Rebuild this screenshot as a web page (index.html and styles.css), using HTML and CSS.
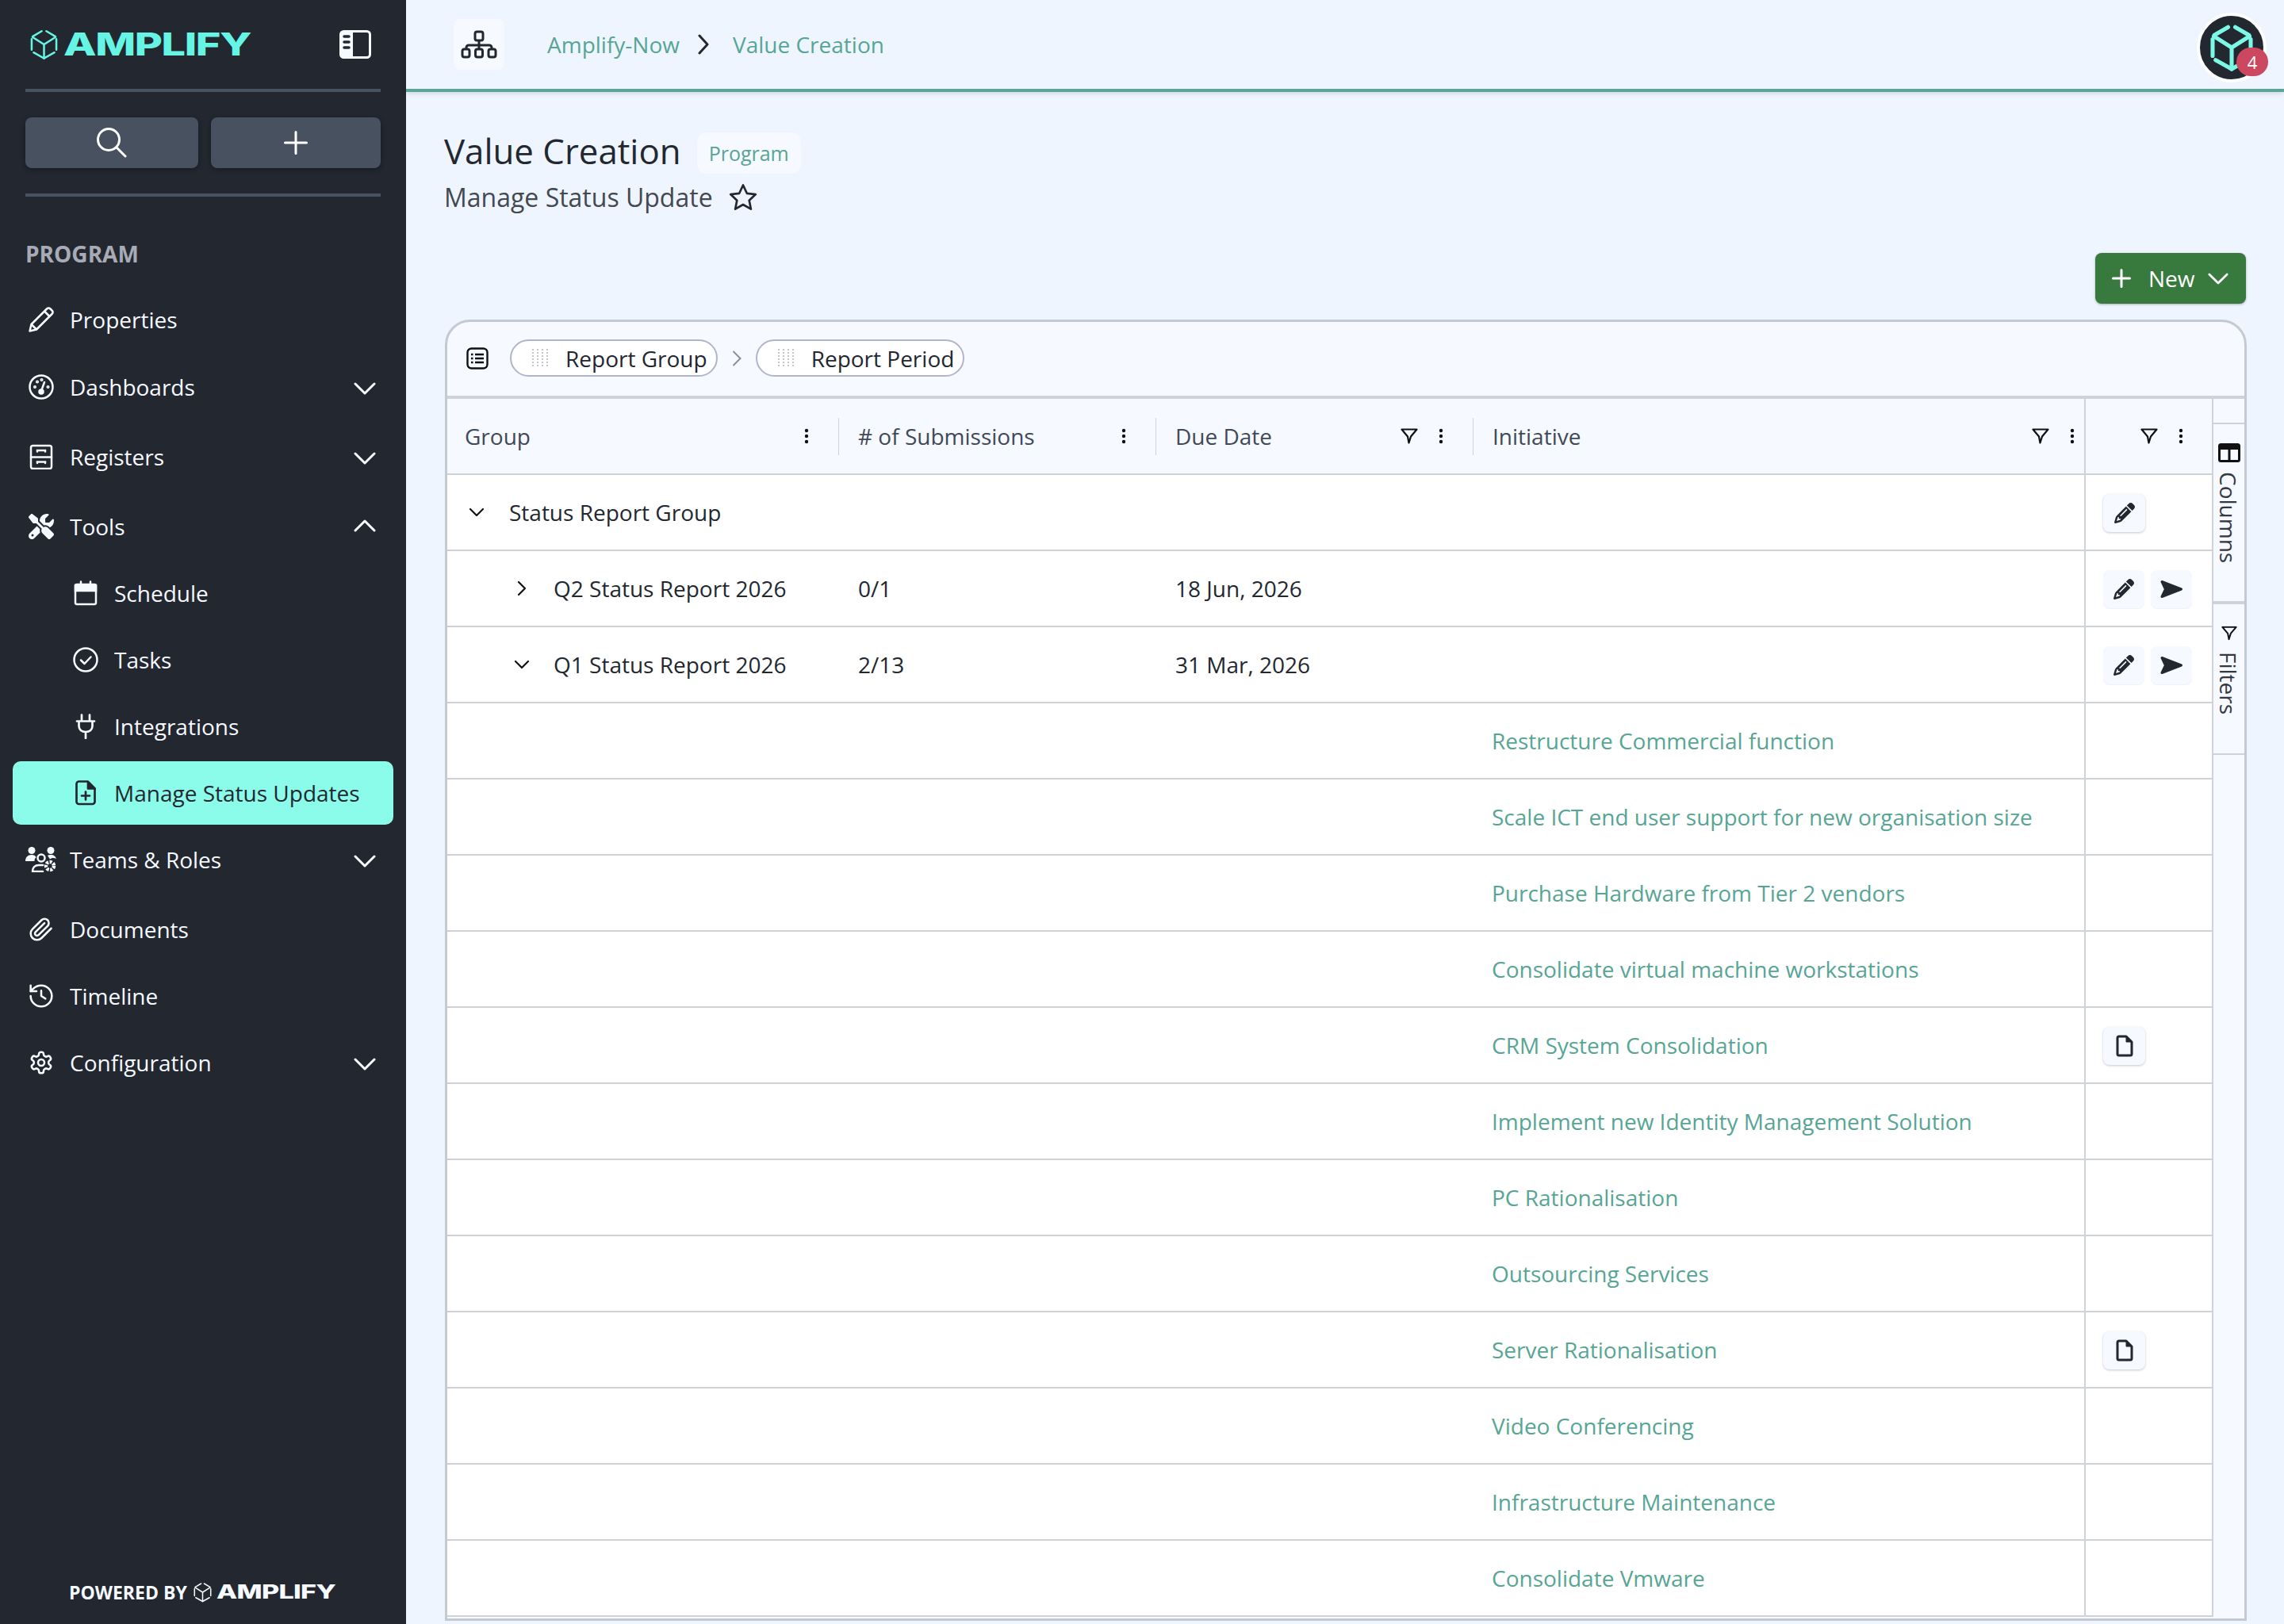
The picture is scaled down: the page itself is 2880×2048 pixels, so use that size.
FILE: index.html
```html
<!DOCTYPE html>
<html>
<head>
  <meta charset="utf-8">
  <title>Value Creation</title>
  <link rel="stylesheet" href="styles.css">
</head>
<body>
  <!-- shared icons -->
  <svg class="sprite" width="0" height="0">
    <symbol id="i-cube" viewBox="0 0 36 40">
      <g fill="none" stroke="currentColor" stroke-linecap="round">
        <path d="M3.5 9.5 15 2.8M21 2.8 32.5 9.5M2 13v14M34 13v14M4.5 30.5 18 38l13.5-7.5"/>
        <path d="M3 10.5 18 20l15-9.500M18 20v18"/>
      </g>
    </symbol>
    <symbol id="i-chev" viewBox="0 0 28 16">
      <path d="M2 2l12 12L26 2" fill="none" stroke="currentColor" stroke-width="3" stroke-linecap="round" stroke-linejoin="round"/>
    </symbol>
    <symbol id="i-small-down" viewBox="0 0 20 12">
      <path d="M2 2l8 8 8-8" fill="none" stroke="currentColor" stroke-width="2.200" stroke-linecap="round" stroke-linejoin="round"/>
    </symbol>
    <symbol id="i-small-right" viewBox="0 0 12 20">
      <path d="M2 2l8 8-8 8" fill="none" stroke="currentColor" stroke-width="2.200" stroke-linecap="round" stroke-linejoin="round"/>
    </symbol>
    <symbol id="i-filter" viewBox="0 0 22 20">
      <path d="M1.500 1.500h19L13 10.500 10.500 18.500 9 10.500z" fill="none" stroke="currentColor" stroke-width="2.200" stroke-linejoin="round"/>
    </symbol>
    <symbol id="i-dots" viewBox="0 0 6 20">
      <circle cx="3" cy="3" r="2.200" fill="currentColor"/>
      <circle cx="3" cy="10" r="2.200" fill="currentColor"/>
      <circle cx="3" cy="17" r="2.200" fill="currentColor"/>
    </symbol>
    <symbol id="i-pencil" viewBox="0 0 512 512">
      <path fill="currentColor" d="M410.300 231l11.300-11.300-33.900-33.900-62.100-62.100L291.700 89.800l-11.300 11.300-22.600 22.600L58.600 322.900c-10.400 10.400-18 23.300-22.200 37.400L1 480.700c-2.500 8.400-.2 17.500 6.100 23.700s15.300 8.500 23.700 6.100l120.300-35.400c14.100-4.200 27-11.800 37.400-22.200L387.700 253.700 410.300 231zM160 399.400l-9.100 22.700c-4 3.100-8.500 5.400-13.300 6.900L59.400 452l23-78.100c1.400-4.900 3.800-9.400 6.900-13.300l22.700-9.100v32c0 8.800 7.200 16 16 16h32zM362.700 18.700L348.300 33.200 325.700 55.800 314.300 67.100l33.900 33.900 62.100 62.100 33.900 33.900 11.300-11.300 22.600-22.600 14.500-14.500c25-25 25-65.500 0-90.500L453.300 18.700c-25-25-65.500-25-90.500 0zm-47.400 168l-144 144c-6.200 6.200-16.400 6.200-22.600 0s-6.200-16.400 0-22.600l144-144c6.200-6.200 16.400-6.200 22.600 0s6.200 16.400 0 22.600z"/>
    </symbol>
    <symbol id="i-send" viewBox="0 0 30 24">
      <path d="M3 2.500 27.500 12 3 21.500 7.500 12z" fill="currentColor" stroke="currentColor" stroke-width="3" stroke-linejoin="round"/>
    </symbol>
    <symbol id="i-file" viewBox="0 0 22 28">
      <path d="M4 2h9l7 7v15a2 2 0 0 1-2 2H4a2 2 0 0 1-2-2V4a2 2 0 0 1 2-2z" fill="none" stroke="currentColor" stroke-width="3" stroke-linejoin="round"/>
      <path d="M13 2l7 7h-7z" fill="currentColor" stroke="currentColor" stroke-linejoin="round"/>
    </symbol>
    <symbol id="i-grip" viewBox="0 0 22 24">
      <g fill="none" stroke="#c2c5ca" stroke-width="2" stroke-dasharray="2 2">
        <path d="M2 0v24M8 0v24M14 0v24M20 0v24"/>
      </g>
    </symbol>
  </svg>

  <div class="app">
    <aside class="sidebar">
      <div class="brand">
        <div class="logo">
          <svg class="logo-cube"><use href="#i-cube"/></svg>
          <span class="logo-text">AMPLIFY</span>
        </div>
        <svg class="toggle" viewBox="0 0 40 36">
          <rect x="1.500" y="1.500" width="37" height="33" rx="4" fill="none" stroke="#f6f9ff" stroke-width="3"/>
          <path d="M4 2h13v32H4a2 2 0 0 1-2-2V4a2 2 0 0 1 2-2z" fill="#f6f9ff"/>
          <path d="M6 8h6M6 15h6M6 22h6" stroke="#222730" stroke-width="3.500" stroke-linecap="round"/>
        </svg>
      </div>
      <div class="side-tools">
        <button class="tool-btn search-btn">
          <svg width="38" height="38" viewBox="0 0 38 38" fill="none" stroke="#fff" stroke-width="3" stroke-linecap="round"><circle cx="15" cy="15" r="13.500"/><path d="M25 25l11 11"/></svg>
        </button>
        <button class="tool-btn">
          <svg width="30" height="30" viewBox="0 0 30 30" fill="none" stroke="#fff" stroke-width="3" stroke-linecap="round"><path d="M15 1.500v27M1.500 15h27"/></svg>
        </button>
      </div>
      <div class="side-label">PROGRAM</div>

      <nav class="nav">
        <a class="nav-item first">
          <svg class="nav-icon" viewBox="0 0 32 32" fill="none" stroke="currentColor" stroke-width="2.500" stroke-linejoin="round"><path d="M1.500 30.500l2-8.500L23 2.500c1.500-1.500 3-1.500 4.500 0l2 2c1.500 1.500 1.500 3 0 4.500L10 28.500z"/><path d="M20 5.500l6.500 6.500"/><path d="M3.500 22l6.500 6.500"/></svg>
          Properties
        </a>
        <a class="nav-item tall">
          <svg class="nav-icon" viewBox="0 0 32 32" fill="none" stroke="currentColor" stroke-width="2.500" stroke-linecap="round"><circle cx="16" cy="16" r="14.500"/><path d="M16 21l4-11"/><circle cx="16" cy="22" r="2.500" fill="currentColor"/><circle cx="8" cy="16" r=".8"/><circle cx="24.500" cy="16" r=".8"/><circle cx="11" cy="9.500" r=".8"/><circle cx="16.500" cy="7" r=".8"/></svg>
          Dashboards
          <svg class="nav-chev"><use href="#i-chev"/></svg>
        </a>
        <a class="nav-item tall">
          <svg class="nav-icon" viewBox="0 0 32 32" fill="none" stroke="currentColor" stroke-width="2.500" stroke-linecap="round"><rect x="3" y="2" width="26" height="29" rx="2.500"/><path d="M3 16.500h26M11 9.500V8h10v1.500M11 24v-1.500h10V24"/></svg>
          Registers
          <svg class="nav-chev"><use href="#i-chev"/></svg>
        </a>
        <a class="nav-item tall">
          <svg class="nav-icon" viewBox="0 0 512 512"><path fill="currentColor" d="M78.600 5C69.100-2.400 55.600-1.500 47 7L7 47c-8.500 8.500-9.400 22-2.100 31.600l80 104c4.500 5.900 11.600 9.400 19 9.400h54.100l109 109c-14.700 29-10 65.400 14.300 89.600l112 112c12.500 12.500 32.800 12.500 45.300 0l64-64c12.500-12.500 12.500-32.800 0-45.300l-112-112c-24.200-24.200-60.600-29-89.600-14.300l-109-109V104c0-7.500-3.500-14.500-9.400-19L78.600 5zM19.900 396.100C7.200 408.800 0 426.100 0 444.100C0 481.600 30.400 512 67.900 512c18 0 35.300-7.200 48-19.900L233.700 374.300c-7.800-20.900-9-43.600-3.600-65.100l-61.700-61.700L19.900 396.100zM512 144c0-10.500-1.100-20.700-3.200-30.500c-2.400-11.200-16.100-14.100-24.200-6l-63.900 63.900c-3 3-7.100 4.700-11.300 4.700H352c-8.800 0-16-7.200-16-16V102.600c0-4.200 1.700-8.300 4.700-11.300l63.900-63.900c8.100-8.100 5.200-21.800-6-24.200C388.700 1.100 378.500 0 368 0C288.500 0 224 64.500 224 144l0 .8 85.300 85.300c36-9.100 75.800 .5 104 28.700L429 274.500c49-23 83-72.800 83-130.500zM56 432a24 24 0 1 1 48 0 24 24 0 1 1 -48 0z"/></svg>
          Tools
          <svg class="nav-chev up"><use href="#i-chev"/></svg>
        </a>
        <div class="sub-list">
          <a class="nav-item sub">
            <svg class="nav-icon" viewBox="0 0 32 32" fill="none" stroke="currentColor" stroke-width="2.500" stroke-linecap="round"><rect x="3" y="5" width="26" height="25" rx="2"/><path d="M3 6h26v7H3z" fill="currentColor"/><path d="M10 1.500V6M22 1.500V6"/></svg>
            Schedule
          </a>
          <a class="nav-item sub">
            <svg class="nav-icon" viewBox="0 0 32 32" fill="none" stroke="currentColor" stroke-width="2.500" stroke-linecap="round" stroke-linejoin="round"><circle cx="16" cy="16" r="14.500"/><path d="M10 16.500l4.500 4.500 8-8.500"/></svg>
            Tasks
          </a>
          <a class="nav-item sub">
            <svg class="nav-icon" viewBox="0 0 32 32" fill="none" stroke="currentColor" stroke-width="2.700" stroke-linecap="round" stroke-linejoin="round"><path d="M11 1.500v8M21 1.500v8M16 23v8M5 9.500h22M7.500 10v5.500C7.500 20 11 23 16 23s8.500-3 8.500-7.500V10"/></svg>
            Integrations
          </a>
          <a class="nav-item sub active">
            <svg class="nav-icon" viewBox="0 0 32 32" fill="none" stroke="currentColor" stroke-width="2.700" stroke-linejoin="round"><path d="M8 1.500h11l9 9V27a3 3 0 0 1-3 3H8a3 3 0 0 1-3-3V4.500a3 3 0 0 1 3-3z" transform="translate(-.5 0)"/><path d="M19 2l8.500 8.500H19z" fill="currentColor"/><path d="M16 14.500v10M11 19.500h10" stroke-linecap="round"/></svg>
            Manage Status Updates
          </a>
        </div>
        <a class="nav-item tall">
          <svg class="nav-icon wide" viewBox="0 0 40 32">
            <g fill="currentColor"><circle cx="8" cy="4.500" r="4.500"/><circle cx="32" cy="4.500" r="4.500"/><path d="M0 18c0-5 3-8 8-8 3 0 4.500 1 5.500 3-1.500 1.500-2 3-2 5z"/><path d="M28 11c1-1 2.500-1 4-1 4 0 6 2 7 5-3-1.500-6-1-8 .5z"/></g>
            <g fill="none" stroke="currentColor" stroke-width="2.500"><circle cx="20" cy="14" r="4.500"/><path d="M9 31c0-5 3-8 8-8h5M9 31h13" stroke-linecap="round"/></g>
            <circle cx="31" cy="24" r="5" fill="none" stroke="currentColor" stroke-width="4.500" stroke-dasharray="3 1.500"/>
          </svg>
          Teams &amp; Roles
          <svg class="nav-chev"><use href="#i-chev"/></svg>
        </a>
        <a class="nav-item tall">
          <svg class="nav-icon" viewBox="0 0 24 24" fill="none" stroke="currentColor" stroke-width="1.900" stroke-linecap="round" stroke-linejoin="round"><path d="m21.440 11.050-9.190 9.190a6 6 0 0 1-8.490-8.490l8.570-8.570A4 4 0 1 1 18 8.840l-8.590 8.570a2 2 0 0 1-2.830-2.830l8.490-8.480"/></svg>
          Documents
        </a>
        <a class="nav-item after-tall">
          <svg class="nav-icon" viewBox="0 0 24 24" fill="none" stroke="currentColor" stroke-width="1.900" stroke-linecap="round" stroke-linejoin="round"><path d="M2 12a10 10 0 1 0 10-10 10.500 10.500 0 0 0-7.400 3L2 7.500"/><path d="M2 2v5.500h5.500"/><path d="M12 7v5l4 2.500"/></svg>
          Timeline
        </a>
        <a class="nav-item">
          <svg class="nav-icon" viewBox="0 0 24 24" fill="none" stroke="currentColor" stroke-width="1.900" stroke-linecap="round" stroke-linejoin="round"><path d="M12.220 2h-.44a2 2 0 0 0-2 2v.18a2 2 0 0 1-1 1.730l-.43.250a2 2 0 0 1-2 0l-.15-.08a2 2 0 0 0-2.730.730l-.22.380a2 2 0 0 0 .730 2.730l.15.100a2 2 0 0 1 1 1.720v.510a2 2 0 0 1-1 1.740l-.15.090a2 2 0 0 0-.73 2.730l.22.380a2 2 0 0 0 2.730.730l.15-.08a2 2 0 0 1 2 0l.43.250a2 2 0 0 1 1 1.730V20a2 2 0 0 0 2 2h.44a2 2 0 0 0 2-2v-.18a2 2 0 0 1 1-1.730l.43-.25a2 2 0 0 1 2 0l.15.080a2 2 0 0 0 2.730-.73l.22-.39a2 2 0 0 0-.73-2.730l-.15-.08a2 2 0 0 1-1-1.740v-.5a2 2 0 0 1 1-1.740l.15-.09a2 2 0 0 0 .73-2.730l-.22-.38a2 2 0 0 0-2.730-.73l-.15.080a2 2 0 0 1-2 0l-.43-.25a2 2 0 0 1-1-1.730V4a2 2 0 0 0-2-2z"/><circle cx="12" cy="12" r="3"/></svg>
          Configuration
          <svg class="nav-chev"><use href="#i-chev"/></svg>
        </a>
      </nav>

      <div class="powered">
        <span>POWERED BY</span>
        <svg class="powered-cube"><use href="#i-cube"/></svg>
        <span class="powered-logo">AMPLIFY</span>
      </div>
    </aside>

    <main class="main">
      <header class="topbar">
        <div class="org-icon">
          <svg width="46" height="36" viewBox="0 0 46 36" fill="none" stroke="#222730" stroke-width="3" stroke-linejoin="round"><rect x="18" y="2" width="10" height="11" rx="2.500"/><path d="M23 13v6M7 24v-2a3 3 0 0 1 3-3h26a3 3 0 0 1 3 3v2M23 19v5"/><rect x="2" y="24" width="9" height="10" rx="2.500"/><rect x="18.500" y="24" width="9" height="10" rx="2.500"/><rect x="35" y="24" width="9" height="10" rx="2.500"/></svg>
        </div>
        <a class="crumb">Amplify-Now</a>
        <svg class="crumb-sep" width="14" height="26" viewBox="0 0 14 26" fill="none" stroke="#222730" stroke-width="3" stroke-linecap="round" stroke-linejoin="round"><path d="M2 2l10 11L2 24"/></svg>
        <a class="crumb">Value Creation</a>
        <div class="avatar">
          <svg class="avatar-cube"><use href="#i-cube"/></svg>
          <span class="avatar-badge">4</span>
        </div>
      </header>

      <section class="page">
        <div class="title-row">
          <h1>Value Creation</h1>
          <span class="type-chip">Program</span>
        </div>
        <div class="subtitle-row">
          <span>Manage Status Update</span>
          <svg width="36" height="34" viewBox="0 0 36 34" fill="none" stroke="#222730" stroke-width="2.700" stroke-linejoin="round"><path d="M18 2.500l4.800 10.300 11 1.300-8.100 7.600 2.200 11L18 27l-9.900 5.700 2.200-11-8.100-7.600 11-1.300z"/></svg>
        </div>
        <div class="action-row">
          <button class="new-btn">
            <svg width="24" height="24" viewBox="0 0 24 24" fill="none" stroke="#fff" stroke-width="3" stroke-linecap="round"><path d="M12 1.500v21M1.500 12h21"/></svg>
            <span>New</span>
            <svg class="new-chev"><use href="#i-chev"/></svg>
          </button>
        </div>

        <div class="card">
          <div class="group-bar">
            <svg width="28" height="28" viewBox="0 0 28 28" fill="none" stroke="#111" stroke-width="2.400"><rect x="1.500" y="1.500" width="25" height="25" rx="5"/><path d="M6 9h2.500M11 9h11M6 14h2.500M11 14h11M6 19h2.500M11 19h11"/></svg>
            <span class="group-chip"><svg class="grip"><use href="#i-grip"/></svg>Report Group</span>
            <svg width="12" height="22" viewBox="0 0 12 22" fill="none" stroke="#8b9098" stroke-width="2"><path d="M1.500 2l9 9-9 9"/></svg>
            <span class="group-chip"><svg class="grip"><use href="#i-grip"/></svg>Report Period</span>
          </div>

          <div class="grid-wrap">
            <div class="grid">
              <div class="grid-head">
                <div class="hcell first-col">Group<svg class="dots"><use href="#i-dots"/></svg></div>
                <div class="hcell">
                  # of Submissions<svg class="dots"><use href="#i-dots"/></svg>
                </div>
                <div class="hcell">
                  Due Date<svg class="filter"><use href="#i-filter"/></svg><svg class="dots near"><use href="#i-dots"/></svg>
                </div>
                <div class="hcell tight">
                  Initiative<svg class="filter"><use href="#i-filter"/></svg><svg class="dots near"><use href="#i-dots"/></svg>
                </div>
                <div class="hcell actions-head">
                  <svg class="filter"><use href="#i-filter"/></svg><svg class="dots near"><use href="#i-dots"/></svg>
                </div>
              </div>

              <div class="row">
                <div class="cell group-cell"><svg class="tree-down"><use href="#i-small-down"/></svg>Status Report Group</div>
                <div class="cell"></div><div class="cell"></div><div class="cell"></div>
                <div class="cell actions"><button class="act-btn raised"><svg class="act-pencil"><use href="#i-pencil"/></svg></button></div>
              </div>
              <div class="row">
                <div class="cell group-cell level-2"><svg class="tree-right"><use href="#i-small-right"/></svg>Q2 Status Report 2026</div>
                <div class="cell">0/1</div><div class="cell">18 Jun, 2026</div><div class="cell"></div>
                <div class="cell actions"><button class="act-btn"><svg class="act-pencil"><use href="#i-pencil"/></svg></button><button class="act-btn"><svg class="act-send"><use href="#i-send"/></svg></button></div>
              </div>
              <div class="row">
                <div class="cell group-cell level-2"><svg class="tree-down"><use href="#i-small-down"/></svg>Q1 Status Report 2026</div>
                <div class="cell">2/13</div><div class="cell">31 Mar, 2026</div><div class="cell"></div>
                <div class="cell actions"><button class="act-btn"><svg class="act-pencil"><use href="#i-pencil"/></svg></button><button class="act-btn"><svg class="act-send"><use href="#i-send"/></svg></button></div>
              </div>

              <div class="row"><div class="cell"></div><div class="cell"></div><div class="cell"></div><div class="cell link">Restructure Commercial function</div><div class="cell actions"></div></div>
              <div class="row"><div class="cell"></div><div class="cell"></div><div class="cell"></div><div class="cell link">Scale ICT end user support for new organisation size</div><div class="cell actions"></div></div>
              <div class="row"><div class="cell"></div><div class="cell"></div><div class="cell"></div><div class="cell link">Purchase Hardware from Tier 2 vendors</div><div class="cell actions"></div></div>
              <div class="row"><div class="cell"></div><div class="cell"></div><div class="cell"></div><div class="cell link">Consolidate virtual machine workstations</div><div class="cell actions"></div></div>
              <div class="row"><div class="cell"></div><div class="cell"></div><div class="cell"></div><div class="cell link">CRM System Consolidation</div><div class="cell actions"><button class="act-btn raised"><svg class="act-file"><use href="#i-file"/></svg></button></div></div>
              <div class="row"><div class="cell"></div><div class="cell"></div><div class="cell"></div><div class="cell link">Implement new Identity Management Solution</div><div class="cell actions"></div></div>
              <div class="row"><div class="cell"></div><div class="cell"></div><div class="cell"></div><div class="cell link">PC Rationalisation</div><div class="cell actions"></div></div>
              <div class="row"><div class="cell"></div><div class="cell"></div><div class="cell"></div><div class="cell link">Outsourcing Services</div><div class="cell actions"></div></div>
              <div class="row"><div class="cell"></div><div class="cell"></div><div class="cell"></div><div class="cell link">Server Rationalisation</div><div class="cell actions"><button class="act-btn raised"><svg class="act-file"><use href="#i-file"/></svg></button></div></div>
              <div class="row"><div class="cell"></div><div class="cell"></div><div class="cell"></div><div class="cell link">Video Conferencing</div><div class="cell actions"></div></div>
              <div class="row"><div class="cell"></div><div class="cell"></div><div class="cell"></div><div class="cell link">Infrastructure Maintenance</div><div class="cell actions"></div></div>
              <div class="row"><div class="cell"></div><div class="cell"></div><div class="cell"></div><div class="cell link">Consolidate Vmware</div><div class="cell actions"></div></div>
            </div>

            <div class="side-panel">
              <div class="side-tab columns-tab">
                <svg width="28" height="24" viewBox="0 0 28 24" fill="none" stroke="#111" stroke-width="3"><rect x="1.500" y="1.500" width="25" height="21" rx="2"/><path d="M2 5h24" stroke-width="6"/><path d="M14 5v18"/></svg>
                <span>Columns</span>
              </div>
              <div class="side-tab filters-tab">
                <svg width="20" height="19" viewBox="0 0 22 20"><use href="#i-filter"/></svg>
                <span>Filters</span>
              </div>
            </div>
          </div>
        </div>
      </section>
    </main>
  </div>
</body>
</html>
```

FILE: styles.css
```css
* {
  box-sizing: border-box;
}

body {
  margin: 0;
  font-family: "Open Sans", "Noto Sans", sans-serif;
  font-size: 28px;
  color: #222730;
  background: #eef5ff;
}

button {
  font: inherit;
  border: none;
  padding: 0;
  cursor: pointer;
}

.sprite {
  position: absolute;
}

.app {
  display: flex;
  width: 2880px;
  height: 2048px;
  overflow: hidden;
}

/* sidebar */
.sidebar {
  position: relative;
  flex: 0 0 512px;
  background: #222730;
  color: #f6f9ff;
}

.brand {
  display: flex;
  align-items: center;
  justify-content: space-between;
  height: 116px;
  margin: 0 32px;
  padding: 0 12px 0 6px;
  border-bottom: 4px solid #475160;
}

.logo {
  display: flex;
  align-items: center;
  color: #66f5e4;
}

.logo-cube {
  width: 35px;
  height: 40px;
  margin-right: 7px;
  stroke-width: 2.6;
}

.logo-text,
.powered-logo {
  display: inline-block;
  font-family: Inter, "Liberation Sans", sans-serif;
  font-weight: 800;
  transform-origin: left center;
}

.logo-text {
  font-size: 39px;
  line-height: 40px;
  letter-spacing: -1px;
  transform: scaleX(1.385);
}

.toggle {
  width: 40px;
  height: 36px;
}

.side-tools {
  display: flex;
  gap: 16px;
  height: 132px;
  margin: 0 32px;
  padding-top: 32px;
  border-bottom: 4px solid #475160;
}

.tool-btn {
  display: flex;
  align-items: center;
  justify-content: center;
  flex: 1;
  height: 64px;
  background: #475160;
  border-radius: 8px;
  box-shadow: 0 2px 6px rgba(0, 0, 0, 0.3);
}

.tool-btn.search-btn {
  flex: 0 0 218px;
}

.side-label {
  margin: 52px 32px 0;
  font-weight: 700;
  line-height: 40px;
  color: #a8abb6;
}

.nav {
  margin-top: 22px;
}

.nav-item {
  display: flex;
  align-items: center;
  height: 84px;
  padding-left: 36px;
  color: #f6f9ff;
}

.nav-item.first {
  height: 82px;
}

.nav-item.tall {
  height: 88px;
}

.nav-item.after-tall {
  margin-top: -2px;
}

.nav-icon {
  flex: none;
  width: 32px;
  height: 32px;
  margin-right: 20px;
}

.nav-icon.wide {
  width: 40px;
  margin-left: -4px;
  margin-right: 16px;
}

.nav-chev {
  width: 28px;
  height: 16px;
  margin-top: 3px;
  margin-left: auto;
  margin-right: 38px;
}

.nav-chev.up {
  margin-top: -3px;
  transform: rotate(180deg);
}

.sub-list {
  margin-top: -2px;
}

.nav-item.sub {
  padding-left: 92px;
}

.nav-item.sub.active {
  height: 80px;
  margin: 2px 16px 0;
  padding-left: 76px;
  background: #8cfcea;
  border-radius: 10px;
  color: #222730;
}

.powered {
  position: absolute;
  left: 87px;
  top: 1992px;
  display: flex;
  align-items: center;
  font-size: 23px;
  font-weight: 700;
  line-height: 32px;
  white-space: nowrap;
}

.powered-cube {
  width: 23px;
  height: 26px;
  margin: 0 6px 0 8px;
  stroke-width: 2.4;
}

.powered-logo {
  font-size: 24px;
  letter-spacing: -0.5px;
  transform: scaleX(1.42);
}

/* top bar */
.main {
  flex: 1;
  min-width: 0;
}

.topbar {
  position: relative;
  display: flex;
  align-items: center;
  height: 116px;
  padding: 0 0 0 60px;
  border-bottom: 4px solid #5aa596;
  box-shadow: 0 2px 6px rgba(0, 0, 0, 0.12);
}

.org-icon {
  display: flex;
  align-items: center;
  justify-content: center;
  width: 64px;
  height: 64px;
  margin-right: 54px;
  background: #f6f9ff;
  border-radius: 8px;
}

.crumb {
  color: #57a595;
}

.crumb-sep {
  margin: 0 30px 0 23px;
}

.avatar {
  position: absolute;
  right: 22px;
  top: 16px;
  display: flex;
  align-items: center;
  justify-content: center;
  width: 88px;
  height: 88px;
  background: #222730;
  border: 4px solid #fff;
  border-radius: 50%;
  color: #7df8e6;
}

.avatar-cube {
  width: 54px;
  height: 60px;
  stroke-width: 3.4;
}

.avatar-badge {
  position: absolute;
  right: -6px;
  bottom: 4px;
  width: 40px;
  height: 36px;
  background: #cc4860;
  border-radius: 18px;
  color: #fff;
  font-size: 22px;
  line-height: 36px;
  text-align: center;
}

/* page */
.page {
  padding: 51px 47px 0 49px;
}

.title-row {
  display: flex;
  align-items: center;
  height: 52px;
}

h1 {
  margin: 0 20px 6px -1px;
  font-size: 43.8px;
  font-weight: 400;
  line-height: 52px;
  color: #222730;
}

.type-chip {
  padding: 0 15px;
  background: #f6f9ff;
  border-radius: 12px;
  color: #57a595;
  font-size: 25px;
  line-height: 52px;
}

.subtitle-row {
  display: flex;
  align-items: center;
  gap: 20px;
  height: 40px;
  margin-top: 9px;
  margin-left: -1px;
  font-size: 32px;
  color: #444850;
}

.action-row {
  display: flex;
  justify-content: flex-end;
  margin-top: 51px;
  margin-right: 1px;
}

.new-btn {
  display: flex;
  align-items: center;
  width: 190px;
  height: 64px;
  padding-left: 21px;
  background: #387a3e;
  border-radius: 8px;
  color: #fff;
  box-shadow: 0 1px 3px rgba(0, 0, 0, 0.3);
}

.new-btn span {
  margin-left: 22px;
}

.new-chev {
  width: 26px;
  height: 15px;
  margin-left: 16px;
}

/* card + grid */
.card {
  height: 1641px;
  margin-top: 20px;
  background: #f6f9ff;
  border: 3px solid #c5cad0;
  border-radius: 32px 32px 0 0;
  overflow: hidden;
}

.group-bar {
  display: flex;
  align-items: center;
  height: 93px;
  padding: 0 0 2px 24px;
}

.group-chip {
  display: flex;
  align-items: center;
  height: 47px;
  padding: 0 11px 0 25px;
  background: #fff;
  border: 2px solid #b0b5cb;
  border-radius: 24px;
}

.group-bar > svg:first-child {
  margin-right: 27px;
}

.group-bar > svg:nth-child(3) {
  margin: 0 18px;
}

.grip {
  width: 22px;
  height: 24px;
  margin-right: 21px;
}

.grid-wrap {
  display: flex;
  border-top: 4px solid #cfd2d6;
}

.grid {
  flex: 0 0 2225px;
}

.grid-head,
.row {
  display: grid;
  grid-template-columns: 493px 400px 400px 771px 161px;
  height: 96px;
  border-bottom: 2px solid #cfd2d6;
}

.grid-head {
  align-items: center;
  background: #f6f9ff;
}

.hcell {
  display: flex;
  align-items: center;
  height: 47px;
  padding: 0 37px 0 24px;
  border-left: 1px solid #cfd2d6;
  color: #3f4957;
  font-weight: 500;
}

.hcell.first-col {
  padding-left: 22px;
  border-left: 0;
}

.hcell.tight {
  padding-right: 12px;
}

.actions-head {
  height: 100%;
  padding-right: 36px;
  border-left: 2px solid #cfd2d6;
}

.filter {
  width: 22px;
  height: 20px;
  margin-left: auto;
  color: #111;
}

.dots {
  width: 6px;
  height: 20px;
  margin-left: auto;
  color: #111;
}

.dots.near {
  margin-left: 26px;
}

.row {
  background: #fff;
}

.cell {
  display: flex;
  align-items: center;
  padding-left: 25px;
  white-space: nowrap;
}

.cell.link {
  padding-left: 24px;
  color: #57a595;
}

.group-cell {
  padding-left: 27px;
}

.group-cell.level-2 {
  padding-left: 84px;
}

.tree-down,
.tree-right {
  width: 20px;
  margin-right: 30px;
  color: #111;
}

.group-cell:not(.level-2) .tree-down {
  margin-right: 31px;
}

.tree-down {
  height: 12px;
}

.tree-right {
  height: 20px;
}

.actions {
  gap: 8px;
  padding-left: 22px;
  border-left: 2px solid #cfd2d6;
}

.act-btn {
  display: flex;
  align-items: center;
  justify-content: center;
  width: 52px;
  height: 48px;
  margin-top: 2px;
  background: #f6f9ff;
  border-radius: 8px;
  color: #222730;
  box-shadow: 0 1px 1px rgba(0, 0, 0, 0.06);
}

.act-btn.raised {
  width: 53px;
  box-shadow: 0 1px 3px rgba(0, 0, 0, 0.22);
}

.act-pencil {
  width: 26px;
  height: 26px;
}

.act-send {
  width: 30px;
  height: 24px;
}

.act-file {
  width: 22px;
  height: 28px;
}

/* columns / filters strip */
.side-panel {
  flex: 1;
  padding-top: 30px;
  border-left: 2px solid #cfd2d6;
  background: #f6f9ff;
}

.side-tab {
  display: flex;
  flex-direction: column;
  align-items: center;
  gap: 12px;
  font-size: 28px;
  color: #333841;
}

.side-tab span {
  writing-mode: vertical-rl;
  line-height: 30px;
  margin-left: -2px;
}

.columns-tab {
  height: 229px;
  padding-top: 24px;
  border-top: 2px solid #cfd2d6;
  border-bottom: 4px solid #cfd2d6;
}

.filters-tab {
  height: 190px;
  padding-top: 27px;
  gap: 14px;
  border-bottom: 2px solid #cfd2d6;
}

.filters-tab svg {
  color: #111;
}
```
